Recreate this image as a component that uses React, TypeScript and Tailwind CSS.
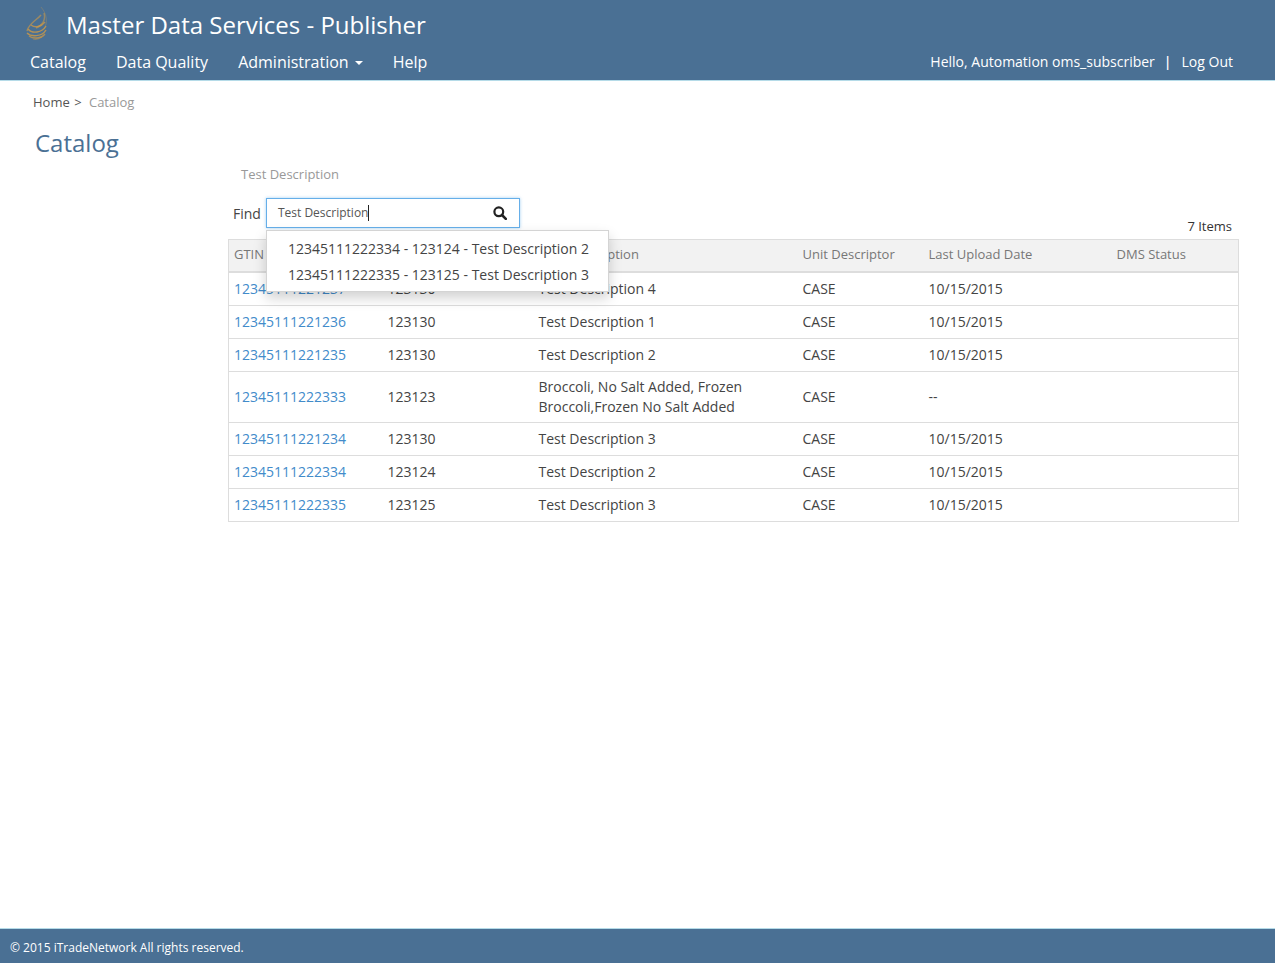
import React from 'react'

const rows = [
  { gtin: '12345111221237', code: '123130', desc: ['Test Description 4'], date: '10/15/2015' },
  { gtin: '12345111221236', code: '123130', desc: ['Test Description 1'], date: '10/15/2015' },
  { gtin: '12345111221235', code: '123130', desc: ['Test Description 2'], date: '10/15/2015' },
  { gtin: '12345111222333', code: '123123', desc: ['Broccoli, No Salt Added, Frozen', 'Broccoli,Frozen No Salt Added'], date: '--' },
  { gtin: '12345111221234', code: '123130', desc: ['Test Description 3'], date: '10/15/2015' },
  { gtin: '12345111222334', code: '123124', desc: ['Test Description 2'], date: '10/15/2015' },
  { gtin: '12345111222335', code: '123125', desc: ['Test Description 3'], date: '10/15/2015' },
]

const headers = ['GTIN', 'Item Code', 'Item Description', 'Unit Descriptor', 'Last Upload Date', 'DMS Status']

function Logo() {
  return (
    <svg width="28" height="36" viewBox="0 0 28 36" fill="none" stroke="#d09a45" className="shrink-0">
      <path d="M17 0c6 7 7 16 3 22" strokeWidth="1" opacity="0.3" />
      <path d="M20 6c2 7-2 13-8 15" strokeWidth="1.5" opacity="0.55" />
      <path d="M17 8C13 13 5 16 3 24" strokeWidth="1.5" opacity="0.6" />
      <path d="M7 18c4 3 10 2 14-3" strokeWidth="1.4" opacity="0.75" />
      <path d="M4 22c4 5 14 4 18-3" strokeWidth="1.4" opacity="0.8" />
      <path d="M3 26c4 4 15 4 19-3" strokeWidth="1.4" opacity="0.8" />
      <path d="M5 29c4 3 12 3 16-2" strokeWidth="1.4" opacity="0.7" />
      <path d="M9 32c3 1 6 0 9-2" strokeWidth="1.2" opacity="0.45" />
    </svg>
  )
}

function SearchGlyph() {
  return (
    <svg width="14" height="14" viewBox="0 0 14 14" fill="none" stroke="#222">
      <circle cx="5.8" cy="5.8" r="4.4" strokeWidth="2.2" />
      <path d="M9 9l3.8 3.8" strokeWidth="2.6" strokeLinecap="round" />
    </svg>
  )
}

export default function App() {
  return (
    <div className="w-[1275px] min-h-[963px] flex flex-col bg-white text-[14px] text-[#444] font-['Open_Sans',sans-serif]">
      <header className="h-[81px] shrink-0 bg-[#4a7094] border-b border-[#b5dbe8] text-white">
        <div className="flex items-center h-[44px] pl-[24px] pt-[6px]">
          <Logo />
          <span className="ml-[14px] text-[24px] leading-[32px]">Master Data Services - Publisher</span>
        </div>
        <div className="flex items-center h-[36px] pl-[30px] pr-[42px] text-[16px]">
          <span>Catalog</span>
          <span className="ml-[30px]">Data Quality</span>
          <span className="ml-[30px] flex items-center">
            Administration
            <span className="ml-[6px] mt-[2px] border-x-[4px] border-t-[4px] border-x-transparent border-t-white" />
          </span>
          <span className="ml-[30px]">Help</span>
          <span className="ml-auto text-[14px] mb-[2px]">Hello, Automation oms_subscriber</span>
          <span className="ml-[9px] text-[14px] font-semibold mb-[2px]">|</span>
          <span className="ml-[10px] text-[14px] mb-[2px]">Log Out</span>
        </div>
      </header>

      <div className="pl-[33px] pt-[12px] text-[13px] leading-[18px] text-[#555]">
        Home <span className="ml-[1px]">&gt;</span> <span className="ml-[4px] text-[#999]">Catalog</span>
      </div>
      <h1 className="ml-[35px] mt-[16px] text-[24px] leading-[32px] text-[#4a7094]">Catalog</h1>

      <main className="ml-[228px] w-[1011px]">
        <p className="ml-[13px] mt-[6px] text-[13px] leading-[18px] text-[#999]">Test Description</p>
        <div className="relative mt-[15px] flex items-start justify-between">
          <div className="flex items-center">
            <label className="ml-[5px] mr-[5px]">Find</label>
            <div className="w-[254px] h-[30px] flex items-center justify-between pl-[11px] pr-[12px] bg-white border border-[#66afe9] shadow-[0_0_3px_rgba(102,175,233,0.6)] text-[12px] text-[#555]">
              <span className="border-r border-[#222] leading-[16px]">Test Description</span>
              <SearchGlyph />
            </div>
          </div>
          <span className="mt-[19px] mr-[7px] text-[13px] leading-[18px] text-[#333]">7 Items</span>
          <div className="absolute left-[38px] top-[32px] z-10 w-[343px] h-[62px] pl-[21px] pt-[5px] bg-white border border-[#d4d4d4] shadow-[0_6px_12px_rgba(0,0,0,0.18)] text-[#444] leading-[26px]">
            <div>12345111222334 - 123124 - Test Description 2</div>
            <div>12345111222335 - 123125 - Test Description 3</div>
          </div>
        </div>

        <table className="mt-[4px] w-full table-fixed border border-[#ddd] border-collapse">
          <colgroup>
            <col className="w-[153px]" />
            <col className="w-[151px]" />
            <col className="w-[264px]" />
            <col className="w-[126px]" />
            <col className="w-[188px]" />
            <col />
          </colgroup>
          <thead>
            <tr className="h-[32px] bg-[#f2f2f2] border-b-2 border-[#ddd] text-[13px] text-[#777]">
              {headers.map((h, i) => (
                <th key={h} className={`${i === 0 ? 'pl-[5px]' : 'pl-[6px]'} pr-[6px] pb-[2px] text-left font-normal`}>{h}</th>
              ))}
            </tr>
          </thead>
          <tbody>
            {rows.map(r => {
              const py = r.desc.length > 1 ? 'py-[5px]' : 'py-[6px]'
              return (
                <tr key={r.gtin} className="border-b border-[#ddd]">
                  <td className={`pl-[5px] pr-[6px] ${py} leading-[20px] text-[#428bca]`}>{r.gtin}</td>
                  <td className={`px-[6px] ${py} leading-[20px]`}>{r.code}</td>
                  <td className={`px-[6px] ${py} leading-[20px]`}>
                    {r.desc.map(d => <div key={d}>{d}</div>)}
                  </td>
                  <td className={`px-[6px] ${py} leading-[20px]`}>CASE</td>
                  <td className={`px-[6px] ${py} leading-[20px]`}>{r.date}</td>
                  <td className={`px-[6px] ${py} leading-[20px]`}></td>
                </tr>
              )
            })}
          </tbody>
        </table>
      </main>

      <footer className="mt-auto h-[35px] shrink-0 flex items-center pl-[10px] pt-[4px] bg-[#4a7094] border-t border-[#b5dbe8] text-[12px] text-white">
        © 2015 iTradeNetwork All rights reserved.
      </footer>
    </div>
  )
}
